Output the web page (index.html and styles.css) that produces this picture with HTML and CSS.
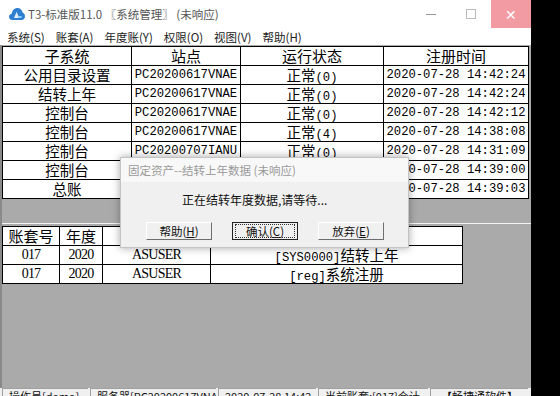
FILE: index.html
```html
<!DOCTYPE html>
<html lang="zh-CN">
<head>
    <meta charset="UTF-8">
    <meta name="viewport" content="width=device-width, initial-scale=1.0">
    <title>T3-标准版11.0 系统管理</title>
    <link rel="stylesheet" href="styles.css">
</head>
<body>
    <div class="window">
        <!-- Barre de titre -->
        <div class="titlebar">
            <svg class="logo" width="16" height="14" viewBox="0 0 16 14">
                <path d="M3.5 13 C1.2 13 0 11.4 0 9.7 C0 8 1.3 6.8 2.8 6.7 C3 3.4 5.4 1 8.4 1 C11.3 1 13.4 3.1 13.7 5.8 C15.1 6.2 16 7.5 16 9.2 C16 11.3 14.5 13 12.4 13 Z" fill="#2f7fd0"/>
                <path d="M5 11 L7.6 4.8 L10.2 11 Z" fill="#ffffff" opacity="0.85"/>
                <path d="M9.2 9 L12.6 9 L12.6 11 L9.2 11 Z" fill="#8fd0ff"/>
            </svg>
            <span class="title">T3-标准版11.0 〖系统管理〗 (未响应)</span>
            <div class="controls">
                <span class="ctl"><span class="min"></span></span>
                <span class="ctl"><span class="max"></span></span>
                <span class="ctl close">✕</span>
            </div>
        </div>

        <!-- Menu -->
        <div class="menubar">
            <span>系统(S)</span>
            <span>账套(A)</span>
            <span>年度账(Y)</span>
            <span>权限(O)</span>
            <span>视图(V)</span>
            <span>帮助(H)</span>
        </div>

        <div class="client">
            <!-- Sessions en cours -->
            <div class="pane pane-top">
                <table class="grid sessions">
                    <colgroup>
                        <col class="c-sys">
                        <col class="c-site">
                        <col class="c-state">
                        <col class="c-time">
                    </colgroup>
                    <thead>
                        <tr><th>子系统</th><th>站点</th><th>运行状态</th><th>注册时间</th></tr>
                    </thead>
                    <tbody>
                        <tr><td class="cn">公用目录设置</td><td class="m">PC20200617VNAE</td><td class="cn">正常<span class="m">(0)</span></td><td class="m">2020-07-28 14:42:24</td></tr>
                        <tr><td class="cn">结转上年</td><td class="m">PC20200617VNAE</td><td class="cn">正常<span class="m">(0)</span></td><td class="m">2020-07-28 14:42:24</td></tr>
                        <tr><td class="cn">控制台</td><td class="m">PC20200617VNAE</td><td class="cn">正常<span class="m">(0)</span></td><td class="m">2020-07-28 14:42:12</td></tr>
                        <tr><td class="cn">控制台</td><td class="m">PC20200617VNAE</td><td class="cn">正常<span class="m">(4)</span></td><td class="m">2020-07-28 14:38:08</td></tr>
                        <tr><td class="cn">控制台</td><td class="m">PC20200707IANU</td><td class="cn">正常<span class="m">(0)</span></td><td class="m">2020-07-28 14:31:09</td></tr>
                        <tr><td class="cn">控制台</td><td class="m">PC20200617VNAE</td><td class="cn">正常<span class="m">(0)</span></td><td class="m">2020-07-28 14:39:00</td></tr>
                        <tr><td class="cn">总账</td><td class="m">PC20200617VNAE</td><td class="cn">正常<span class="m">(0)</span></td><td class="m">2020-07-28 14:39:03</td></tr>
                    </tbody>
                </table>
            </div>

            <div class="splitter"></div>

            <!-- Journal des tâches -->
            <div class="pane pane-bottom">
                <table class="grid tasks">
                    <colgroup>
                        <col class="c-acc">
                        <col class="c-year">
                        <col class="c-user">
                        <col class="c-func">
                    </colgroup>
                    <thead>
                        <tr><th>账套号</th><th>年度</th><th>操作员</th><th>执行功能</th></tr>
                    </thead>
                    <tbody>
                        <tr><td class="s">017</td><td class="s">2020</td><td class="s">ASUSER</td><td class="cn"><span class="m">[SYS0000]</span>结转上年</td></tr>
                        <tr><td class="s">017</td><td class="s">2020</td><td class="s">ASUSER</td><td class="cn"><span class="m">[reg]</span>系统注册</td></tr>
                    </tbody>
                </table>
            </div>
        </div>

        <!-- Barre d'état -->
        <div class="statusbar">
            <span class="panel p-op">操作员[demo]</span>
            <span class="panel p-srv">服务器[PC20200617VNAE]</span>
            <span class="panel p-date">2020-07-28 14:42</span>
            <span class="panel p-acc">当前账套:[017]会计</span>
            <span class="panel p-brand">【畅捷通软件】</span>
        </div>

        <!-- Boîte de dialogue bloquée -->
        <div class="dialog">
            <div class="dialog-title">固定资产--结转上年数据 (未响应)</div>
            <div class="dialog-body">
                <div class="message">正在结转年度数据,请等待...</div>
                <div class="buttons">
                    <button class="btn">帮助(<u>H</u>)</button>
                    <button class="btn default"><span class="focus">确认(<u>C</u>)</span></button>
                    <button class="btn">放弃(<u>E</u>)</button>
                </div>
            </div>
        </div>
    </div>
</body>
</html>
```

FILE: styles.css
```css
html, body {
    margin: 0;
    padding: 0;
    height: 100%;
    overflow: hidden;
    background-color: #000;
}
.window {
    position: relative;
    width: 531px;
    height: 396px;
    overflow: hidden;
    background-color: #aaaaaa;
    font-family: "Noto Sans CJK SC", sans-serif;
}
.titlebar {
    height: 28px;
    display: flex;
    align-items: center;
    background-color: #fff;
}
.logo {
    margin-left: 9px;
    margin-right: 3px;
}
.title {
    font-size: 11.5px;
    color: #555;
    white-space: nowrap;
}
.controls {
    margin-left: auto;
    display: flex;
    height: 100%;
}
.ctl {
    width: 40px;
    display: flex;
    align-items: center;
    justify-content: center;
}
.min {
    width: 10px;
    border-top: 1px solid #999;
}
.max {
    width: 8px;
    height: 8px;
    border: 1px solid #bbb;
}
.close {
    width: 40px;
    background-color: #f29ba2;
    color: #fff;
    font-size: 14px;
}
.menubar {
    height: 17px;
    display: flex;
    align-items: center;
    gap: 11px;
    padding-left: 7px;
    background-color: #fff;
    font-size: 11.5px;
    color: #222;
}
.client {
    height: 343px;
    border-left: 2px solid #8a8a8a;
    display: flex;
    flex-direction: column;
}
.pane-top {
    height: 177px;
    padding-top: 1px;
}
.splitter {
    height: 1px;
    background-color: #f4f4f4;
    margin-bottom: 2px;
}
.pane-bottom {
    flex: 1;
}
.grid {
    border-collapse: collapse;
    table-layout: fixed;
    background-color: #fff;
    color: #000;
}
.grid th, .grid td {
    height: 18px;
    padding: 0;
    border: 1px solid #000;
    text-align: center;
    white-space: nowrap;
    overflow: hidden;
    line-height: 18px;
}
.grid th {
    font-weight: normal;
    font-size: 15px;
}
.cn {
    font-size: 14.5px;
}
.m {
    font-family: "Liberation Mono", monospace;
    font-size: 12.2px;
}
.s {
    font-family: "Liberation Serif", serif;
    font-size: 14px;
    letter-spacing: -0.8px;
}
.cn .m {
    line-height: 12px;
}
.sessions {
    width: 527px;
}
.c-sys { width: 129px; }
.c-site { width: 109px; }
.c-state { width: 143px; }
.c-time { width: 145px; }
.tasks {
    width: 461px;
}
.c-acc { width: 57px; }
.c-year { width: 43px; }
.c-user { width: 108px; }
.c-func { width: 252px; }
.statusbar {
    position: absolute;
    left: 0;
    top: 388px;
    width: 531px;
    height: 22px;
    display: flex;
    gap: 2px;
    padding-left: 2px;
    background-color: #f0f0f0;
    font-size: 11px;
}
.panel {
    box-sizing: border-box;
    height: 20px;
    padding: 0 0 0 6px;
    line-height: 14px;
    border-left: 1px solid #a0a0a0;
    border-top: 1px solid #a0a0a0;
    white-space: nowrap;
    overflow: hidden;
    color: #111;
}
.p-op { width: 86px; }
.p-srv { width: 126px; }
.p-date { width: 98px; }
.p-acc { width: 110px; }
.p-brand { width: 98px; padding-left: 10px; }
.dialog {
    position: absolute;
    left: 120px;
    top: 157px;
    width: 289px;
    height: 91px;
    box-sizing: border-box;
    border: 1px solid #c4c4c4;
    background-color: #f0f0f0;
    box-shadow: 0 0 8px rgba(0, 0, 0, 0.35);
}
.dialog-title {
    height: 24px;
    line-height: 24px;
    padding-left: 7px;
    background-color: #f8f8f8;
    font-size: 11.5px;
    color: #9a9a9a;
}
.message {
    margin-top: 10px;
    height: 16px;
    line-height: 16px;
    padding-left: 61px;
    font-size: 12px;
    color: #111;
}
.buttons {
    display: flex;
    gap: 20px;
    margin-top: 14px;
    padding-left: 25px;
}
.btn {
    width: 66px;
    height: 18px;
    padding: 0;
    font-family: "Noto Sans CJK SC", sans-serif;
    font-size: 11.5px;
    line-height: 14px;
    color: #111;
    background-color: #f0f0f0;
    border: 1px solid;
    border-color: #fff #6e6e6e #6e6e6e #fff;
}
.btn.default {
    border: 1px solid #222;
}
.focus {
    display: inline-block;
    padding: 0 10px;
    outline: 1px dotted #333;
    line-height: 12px;
}
```
